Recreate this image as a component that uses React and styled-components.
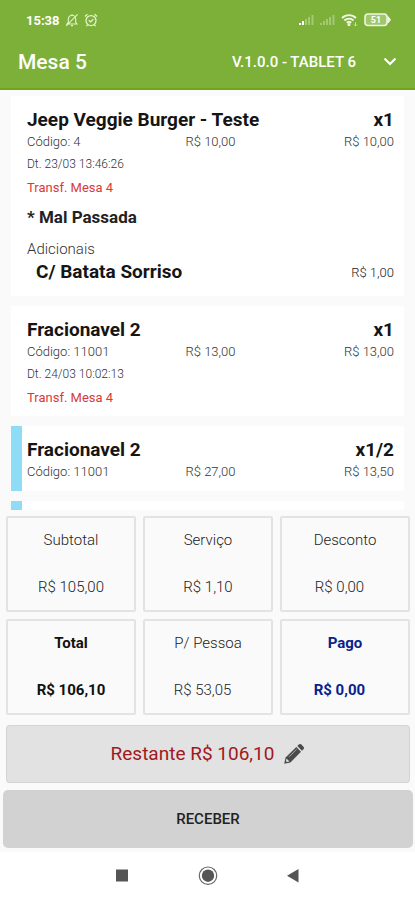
import styled, { createGlobalStyle } from "styled-components";

const items = [
  {
    name: "Jeep Veggie Burger - Teste",
    qty: "x1",
    code: "4",
    price: "R$ 10,00",
    total: "R$ 10,00",
    date: "23/03 13:46:26",
    transfer: "Transf. Mesa 4",
    note: "* Mal Passada",
    extras: [{ name: "C/ Batata Sorriso", price: "R$ 1,00" }],
  },
  {
    name: "Fracionavel 2",
    qty: "x1",
    code: "11001",
    price: "R$ 13,00",
    total: "R$ 13,00",
    date: "24/03 10:02:13",
    transfer: "Transf. Mesa 4",
  },
  {
    name: "Fracionavel 2",
    qty: "x1/2",
    code: "11001",
    price: "R$ 27,00",
    total: "R$ 13,50",
    split: true,
  },
];

const totals = [
  { label: "Subtotal", value: "R$ 105,00" },
  { label: "Serviço", value: "R$ 1,10" },
  { label: "Desconto", value: "R$ 0,00   " },
  { label: "Total", value: "R$ 106,10", color: "#111", bold: true },
  { label: "P/ Pessoa", value: "R$ 53,05   " },
  { label: "Pago", value: "R$ 0,00   ", color: "#0a1f8f", bold: true },
];

export default function App() {
  return (
    <Screen>
      <GlobalStyle />
      <Header>
        <StatusBar />
        <Toolbar>
          <Title>Mesa 5</Title>
          <Version>V.1.0.0 - TABLET 6</Version>
          <MenuButton aria-label="Menu">
            <svg width="14" height="10" viewBox="0 0 14 10">
              <path
                d="M1.5 1.5l5.5 5.5 5.5-5.500"
                fill="none"
                stroke="#fff"
                strokeWidth="2.2"
              />
            </svg>
          </MenuButton>
        </Toolbar>
      </Header>
      <List>
        {items.map((item, i) => (
          <Item key={i} item={item} />
        ))}
        <Card $split />
      </List>
      <Totals>
        {totals.map((t) => (
          <Cell key={t.label} $color={t.color} $bold={t.bold}>
            <dt>{t.label}</dt>
            <dd>{t.value}</dd>
          </Cell>
        ))}
      </Totals>
      <Actions>
        <Remaining>
          Restante R$ 106,10
          <PencilIcon />
        </Remaining>
        <Receive>RECEBER</Receive>
      </Actions>
      <NavBar>
        <NavButton aria-label="Recentes">
          <svg width="22" height="22" viewBox="0 0 22 22">
            <rect x="5" y="4.5" width="12" height="12" fill="#555" />
          </svg>
        </NavButton>
        <NavButton aria-label="Início">
          <svg width="22" height="22" viewBox="0 0 22 22">
            <circle cx="11" cy="10.7" r="8.7" fill="none" stroke="#666" strokeWidth="1.2" />
            <circle cx="11" cy="10.7" r="6.2" fill="#555" />
          </svg>
        </NavButton>
        <NavButton aria-label="Voltar">
          <svg width="22" height="22" viewBox="0 0 22 22">
            <path d="M15.5 4v13.4L4 10.7z" fill="#555" />
          </svg>
        </NavButton>
      </NavBar>
    </Screen>
  );
}

function Item({ item }) {
  return (
    <Card $split={item.split}>
      <Line>
        <Name>{item.name}</Name>
        <Name as="span">{item.qty}</Name>
      </Line>
      <Meta>
        <span>Código: {item.code}</span>
        <span>{item.price}</span>
        <span>{item.total}</span>
      </Meta>
      {item.date && <DateText>Dt. {item.date}</DateText>}
      {item.transfer && <Transfer>{item.transfer}</Transfer>}
      {item.note && <Note>{item.note}</Note>}
      {item.extras && (
        <Extras>
          <ExtrasLabel>Adicionais</ExtrasLabel>
          {item.extras.map((extra) => (
            <ExtraLine key={extra.name}>
              <Name as="span">{extra.name}</Name>
              <ExtraPrice>{extra.price}</ExtraPrice>
            </ExtraLine>
          ))}
        </Extras>
      )}
    </Card>
  );
}

function StatusBar() {
  return (
    <Status>
      <Clock>15:38</Clock>
      <svg width="14" height="14" viewBox="0 0 14 14" fill="none" stroke="#e6f2d5" strokeWidth="1.1">
        <path d="M2 11h10l-1.3-1.8V6a3.7 3.7 0 0 0-7.4 0v3.2zM6 12.6h2M7 2.3V1M12.6 1.4L1.2 12.8" />
      </svg>
      <svg width="14" height="14" viewBox="0 0 14 14" fill="none" stroke="#e6f2d5" strokeWidth="1.3">
        <circle cx="7" cy="7.6" r="5" />
        <path d="M1 3.4L3.4 1.2M13 3.4l-2.4-2.2M4.8 7.2l1.8 1.7 2.8-2.7M3.6 11.6l-1.2 1.5M10.4 11.6l1.2 1.5" />
      </svg>
      <Spacer />
      <svg width="16" height="12" viewBox="0 0 16 12" fill="#fff">
        <path d="M0 11h2V9H0zM3 11h2V7H3z" />
        <path d="M6 11h2V5H6zM9 11h2V3H9zM12.5 11h2V1h-2z" opacity=".3" />
      </svg>
      <svg width="16" height="12" viewBox="0 0 16 12" fill="#fff" opacity=".3">
        <path d="M0 11h2V9H0zM3 11h2V7H3zM6 11h2V5H6zM9 11h2V3H9zM12.5 11h2V1h-2z" />
      </svg>
      <svg width="18" height="14" viewBox="0 0 18 14" fill="none" stroke="#f1f8e6" strokeWidth="1.9">
        <path d="M1 5a10 10 0 0 1 14 0M3.4 7.5a6.6 6.6 0 0 1 9.200 0M5.8 9.900a3.2 3.2 0 0 1 4.4 0" />
        <circle cx="8" cy="11.6" r=".6" fill="#f1f8e6" />
        <path d="M14.5 9v4M13 11.500l1.500 1.500 1.500-1.500" strokeWidth="1" opacity=".6" />
      </svg>
      <svg width="27" height="14" viewBox="0 0 27 14">
        <rect x="1" y="1" width="22" height="11.5" rx="3" fill="#a0c76c" stroke="#eef6e0" strokeWidth="1.6" />
        <path d="M24 3.500l2.500 3.200L24 10z" fill="#eef6e0" stroke="#eef6e0" />
        <text x="12" y="10" textAnchor="middle" fontSize="9" fontWeight="700" fill="#fff">
          51
        </text>
      </svg>
    </Status>
  );
}

function PencilIcon() {
  return (
    <svg width="22" height="22" viewBox="0 0 22 22" aria-hidden="true">
      <path
        d="M1.2 20.8l1.4-6.200L13.3 4l4.700 4.700L7.4 19.4z"
        fill="#4a4a4a"
      />
      <path d="M14.3 3l1.8-1.700q1-.8 2 0l2.600 2.600q.8 1 0 2L19 7.7z" fill="#4a4a4a" />
      <path d="M3.600 15.600l2.800 2.800-2.600.6-.8-.8z" fill="#e2e2e2" />
      <path d="M6 13.800l7.500-7.500" stroke="#b5b5b5" strokeWidth=".9" />
    </svg>
  );
}

const GlobalStyle = createGlobalStyle`
  * {
    box-sizing: border-box;
  }
  body {
    margin: 0;
    background: #fafafa;
    font-family: Roboto, "Liberation Sans", sans-serif;
  }
  button {
    margin: 0;
    padding: 0;
    border: 0;
    background: none;
    font-family: inherit;
  }
  svg {
    display: block;
    flex: none;
  }
`;

const Screen = styled.div`
  display: flex;
  flex-direction: column;
  height: 100vh;
`;

const Header = styled.header`
  background: #7db039;
  border-bottom: 2px solid #6fa516;
  color: #fff;
`;

const Status = styled.div`
  display: flex;
  align-items: center;
  gap: 5px;
  height: 40px;
  padding: 0 24px 0 26px;
`;

const Clock = styled.time`
  font-size: 13px;
  font-weight: 700;
`;

const Spacer = styled.div`
  flex: 1;
`;

const Toolbar = styled.div`
  display: flex;
  align-items: center;
  height: 48px;
  padding: 0 18px 4px;
`;

const Title = styled.h1`
  flex: 1;
  margin: 0;
  font-size: 21px;
  font-weight: 500;
`;

const Version = styled.span`
  font-size: 15px;
  font-weight: 500;
`;

const MenuButton = styled.button`
  padding: 8px 0 8px 27px;
`;

const List = styled.main`
  flex: 1;
  min-height: 0;
  overflow: hidden;
  padding: 6px 11px 0;
`;

const Card = styled.article`
  margin-bottom: 10px;
  padding: 12px 10px 10px ${(p) => (p.$split ? 5 : 16)}px;
  border-left: ${(p) => (p.$split ? "11px solid #8fdcf6" : "0")};
  background: #fff;
`;

const Line = styled.div`
  display: flex;
  justify-content: space-between;
  align-items: center;
`;

const Name = styled.h2`
  margin: 0;
  font-size: 19px;
  font-weight: 700;
  line-height: 24px;
  color: #151515;
`;

const Meta = styled.div`
  display: grid;
  grid-template-columns: 1fr auto 1fr;
  font-size: 13px;
  font-weight: 300;
  line-height: 19px;
  color: #333;

  span:last-child {
    text-align: right;
  }
`;

const DateText = styled.p`
  margin: 5px 0 0;
  font-size: 12px;
  font-weight: 300;
  line-height: 17px;
  color: #333;
`;

const Transfer = styled.p`
  margin: 6px 0 0;
  font-size: 13px;
  line-height: 17px;
  color: #d93a38;
`;

const Note = styled.p`
  margin: 9px 0 0;
  font-size: 17px;
  font-weight: 700;
  line-height: 24px;
  color: #222;
`;

const Extras = styled.section`
  margin: 11px 0 2px;
`;

const ExtrasLabel = styled.div`
  font-size: 15px;
  font-weight: 300;
  line-height: 18px;
  color: #333;
`;

const ExtraLine = styled(Line)`
  margin-top: 2px;
  padding-left: 9px;
`;

const ExtraPrice = styled.span`
  font-size: 13px;
  font-weight: 300;
  color: #222;
`;

const Totals = styled.dl`
  display: grid;
  grid-template-columns: repeat(3, 1fr);
  gap: 7px;
  margin: 0;
  padding: 6px 5px 10px 6px;
`;

const Cell = styled.div`
  display: flex;
  flex-direction: column;
  align-items: center;
  gap: 27px;
  padding: 12px 0 13px;
  border: 2px solid #e3e3e3;
  border-radius: 2px;
  font-size: 15px;
  font-weight: ${(p) => (p.$bold ? 700 : 300)};
  line-height: 20px;
  color: ${(p) => p.$color || "#222"};

  dt,
  dd {
    margin: 0;
    white-space: pre;
  }
`;

const Actions = styled.div`
  display: flex;
  flex-direction: column;
  gap: 7px;
  padding: 0 2px 4px 3px;
`;

const Remaining = styled.button`
  display: flex;
  justify-content: center;
  align-items: center;
  gap: 9px;
  margin: 0 3px;
  padding: 16px 0;
  border: 1px solid #d4d4d4;
  border-radius: 3px;
  background: #e2e2e2;
  font-size: 19px;
  line-height: 24px;
  color: #a01820;
`;

const Receive = styled.button`
  padding: 17px 0;
  border-radius: 5px;
  background: #d2d2d2;
  font-size: 15px;
  font-weight: 500;
  line-height: 24px;
  color: #222;
`;

const NavBar = styled.nav`
  display: flex;
  justify-content: center;
  align-items: center;
  gap: 64px;
  height: 48px;
  background: #fff;
`;

const NavButton = styled.button`
  line-height: 0;
`;
